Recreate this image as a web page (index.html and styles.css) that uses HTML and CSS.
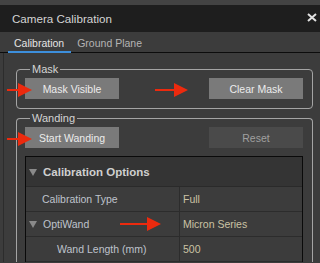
FILE: index.html
```html
<!DOCTYPE html>
<html>
<head>
<meta charset="utf-8">
<link rel="stylesheet" href="styles.css">
</head>
<body>
<div class="window">
  <div class="topstrip"></div>
  <div class="titlebar">
    <span class="title">Camera Calibration</span>
    <svg class="close" width="10" height="9" viewBox="0 0 10 9"><path d="M1 1 L9 8 M9 1 L1 8" stroke="#e0e0e0" stroke-width="2"/></svg>
  </div>
  <div class="tabs">
    <div class="tab active">Calibration</div>
    <div class="tab">Ground Plane</div>
  </div>
  <div class="content">
    <fieldset class="group">
      <legend>Mask</legend>
      <div class="btnrow">
        <button class="btn">Mask Visible</button>
        <button class="btn">Clear Mask</button>
      </div>
    </fieldset>
    <fieldset class="group wanding">
      <legend>Wanding</legend>
      <div class="btnrow">
        <button class="btn">Start Wanding</button>
        <button class="btn disabled">Reset</button>
      </div>
      <div class="table">
        <div class="thead"><span class="tri"></span>Calibration Options</div>
        <div class="row"><div class="cell label l1">Calibration Type</div><div class="cell value">Full</div></div>
        <div class="row"><div class="cell label sec"><span class="tri"></span>OptiWand</div><div class="cell value">Micron Series</div></div>
        <div class="row"><div class="cell label l2">Wand Length (mm)</div><div class="cell value">500</div></div>
      </div>
    </fieldset>
  </div>
  <div class="arrow a1"></div>
  <div class="arrow a2"></div>
  <div class="arrow a3"></div>
  <div class="arrow a4"></div>
</div>
</body>
</html>
```
FILE: styles.css
```css
html, body {
  margin: 0;
  padding: 0;
  background: #3c3c3c;
  overflow: hidden;
}
.window {
  position: relative;
  width: 320px;
  height: 263px;
  overflow: hidden;
  font-family: "Liberation Sans", Arial, sans-serif;
  font-size: 10.5px;
  color: #d8d8d8;
}
.topstrip {
  height: 5px;
  background: #434343;
}
.titlebar {
  height: 27px;
  background: #1e1e1e;
  display: flex;
  align-items: center;
  justify-content: space-between;
  padding: 0 3px 0 12px;
}
.title {
  color: #d4d4d4;
  font-size: 11.6px;
  margin-top: -1px;
}
.close {
  display: block;
  margin-top: -2px;
}
.tabs {
  height: 20px;
  border-bottom: 1px solid #0c0c0c;
  display: flex;
  padding-left: 8px;
}
.tab {
  height: 20px;
  line-height: 22px;
  padding: 0 6px;
  color: #b4b4b4;
}
.tab.active {
  color: #e4e4e4;
  border-bottom: 2px solid #3d8fdc;
  height: 19px;
  margin-bottom: -1px;
  padding: 0 7px 0 6px;
}
.content {
  border-left: 1px solid #2c2c2c;
  margin-left: 3px;
  padding: 9px 7px 0 12px;
  height: 200px;
  overflow: hidden;
}
.group {
  margin: 0;
  border: 1px solid #a4a4a4;
  border-radius: 4px;
  padding: 2px 9px 9px 8px;
}
.group legend {
  padding: 0 2px;
  margin-left: 5px;
  color: #d4d4d4;
  line-height: 14px;
  font-size: 11px;
}
.wanding {
  margin-top: 2px;
  border-bottom: none;
  border-bottom-left-radius: 0;
  border-bottom-right-radius: 0;
  padding-bottom: 0;
}
.btnrow {
  display: flex;
  justify-content: space-between;
}
.btn {
  width: 94px;
  height: 21px;
  border: none;
  background: #7a7a7a;
  color: #ececec;
  font-family: inherit;
  font-size: 10.5px;
  padding: 0;
  line-height: 20px;
}
.btn.disabled {
  background: #4a4a4a;
  color: #a0a0a0;
}
.table {
  margin-top: 8px;
  border: 1px solid #0a0a0a;
  border-bottom: none;
  height: 110px;
}
.thead {
  height: 29px;
  background: #343434;
  display: flex;
  align-items: center;
  font-weight: bold;
  color: #cfcfcf;
  border-bottom: 1px solid #2a2a2a;
  padding-left: 3px;
  font-size: 11.5px;
}
.tri {
  width: 0;
  height: 0;
  border-left: 4px solid transparent;
  border-right: 4px solid transparent;
  border-top: 7px solid #8a8a8a;
  margin-right: 6px;
  margin-top: 1px;
}
.row {
  display: flex;
  height: 24px;
  border-bottom: 1px solid #2c2c2c;
}
.cell {
  display: flex;
  align-items: center;
}
.label {
  border-right: 1px solid #2c2c2c;
  color: #bfc3cc;
}
.l1 { padding-left: 16px; width: 137px; }
.sec { padding-left: 3px; width: 150px; }
.l2 { padding-left: 31px; width: 122px; }
.value {
  padding-left: 3px;
  color: #cbc3a4;
}
.arrow {
  position: absolute;
  height: 2px;
  background: #ec2a0e;
}
.arrow::after {
  content: "";
  position: absolute;
  right: -14px;
  top: -6px;
  border-top: 7px solid transparent;
  border-bottom: 7px solid transparent;
  border-left: 14px solid #ec2a0e;
}
.a1 { left: 7px; top: 89px; width: 11px; }
.a2 { left: 155px; top: 89px; width: 19px; }
.a3 { left: 7px; top: 138px; width: 11px; }
.a4 { left: 120px; top: 223px; width: 27px; }
```
